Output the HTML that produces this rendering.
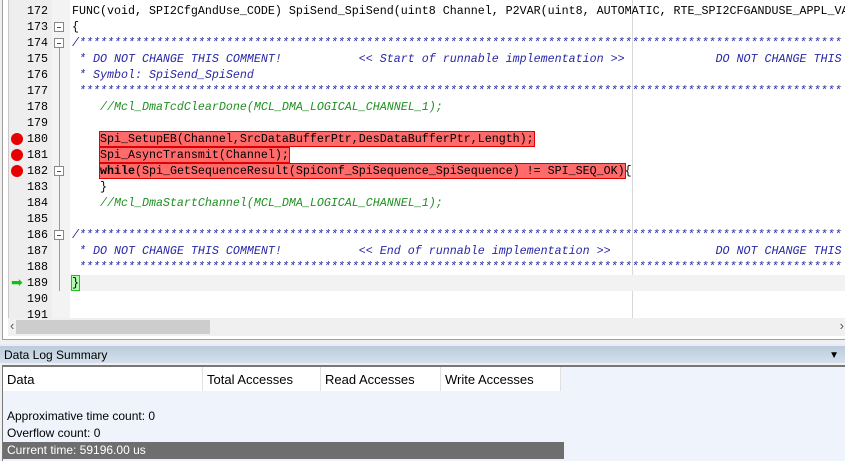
<!DOCTYPE html>
<html><head><style>
*{margin:0;padding:0;box-sizing:border-box}
body{width:845px;height:461px;overflow:hidden;background:#f0f0f0;position:relative;font-family:"Liberation Sans",sans-serif}
#ed{position:absolute;left:2px;top:0;width:843px;height:340px;border-left:1px solid #a0a0a0;border-bottom:1px solid #a0a0a0;background:#fff}
#inner{position:absolute;left:5px;top:0;width:838px;height:318px;background:#fff;overflow:hidden;border-left:1px solid #c8c8c8}
#gut{position:absolute;left:0;top:0;width:43px;height:318px;background:#eeeeee}
#fold{position:absolute;left:43px;top:0;width:18px;height:318px;background:#f3f3f3}
.row{position:absolute;left:0;height:16px;width:838px;font-family:"Liberation Mono",monospace;font-size:11.67px;line-height:16px;white-space:pre}
.num{position:absolute;left:0;width:39px;text-align:right;color:#000}
.code{position:absolute;left:63px}
.cm{color:#2828a8;font-style:italic}
.gr{color:#209020;font-style:italic}
.hl{background:#ff6a6a;outline:1px solid #e00000}
.bp{position:absolute;left:2px;top:2px;width:12px;height:12px;border-radius:50%;background:#e80000}
.box{position:absolute;left:45px;top:3px;width:10px;height:10px;border:1px solid #888;background:#fff}
.box:after{content:"";position:absolute;left:2px;top:4px;width:4px;height:1px;background:#555}
#vl{position:absolute;left:623px;top:0;width:1px;height:318px;background:#d8d8d8}
#sb{position:absolute;left:5px;top:318px;width:838px;height:18px;background:#f0f0f0}
#thumb{position:absolute;left:8px;top:2px;width:194px;height:14px;background:#cdcdcd}
#hdr{position:absolute;left:0;top:344px;width:845px;height:19px;background:linear-gradient(#bccbdb,#d4e0ec);font-size:12px;line-height:19px;padding-left:4px;color:#000;border-top:2px solid #e8ecf6}
#tbl{position:absolute;left:2px;top:365px;width:843px;height:96px;background:#eef3fc;border-left:1px solid #777;border-top:2px solid #777}
.th{position:absolute;top:0;height:24px;background:#fff;border-right:1px solid #e0e0e0;font-size:13px;line-height:26px;padding-left:4px}
.t{position:absolute;left:4px;font-size:12px;line-height:16px}
</style></head><body>
<div id="ed">
<div id="inner">
<div id="gut"></div><div id="fold"></div>
<div style="position:absolute;left:50px;top:43px;width:1px;height:248px;background:#999"></div>
<div id="vl"></div>
<div style="position:absolute;top:275px;width:838px;height:16px;background:#f2f2f2;left:61px"></div>

<div class="row" style="top:3px"><span class="num">172</span><span class="code">FUNC(void, SPI2CfgAndUse_CODE) SpiSend_SpiSend(uint8 Channel, P2VAR(uint8, AUTOMATIC, RTE_SPI2CFGANDUSE_APPL_VA</span></div>
<div class="row" style="top:19px"><span class="num">173</span><span class="box"></span><span class="code">{</span></div>
<div class="row" style="top:35px"><span class="num">174</span><span class="box"></span><span class="code cm">/*************************************************************************************************************</span></div>
<div class="row" style="top:51px"><span class="num">175</span><span class="code cm"> * DO NOT CHANGE THIS COMMENT!           &lt;&lt; Start of runnable implementation &gt;&gt;             DO NOT CHANGE THIS</span></div>
<div class="row" style="top:67px"><span class="num">176</span><span class="code cm"> * Symbol: SpiSend_SpiSend</span></div>
<div class="row" style="top:83px"><span class="num">177</span><span class="code cm"> *************************************************************************************************************</span></div>
<div class="row" style="top:99px"><span class="num">178</span><span class="code gr">    //Mcl_DmaTcdClearDone(MCL_DMA_LOGICAL_CHANNEL_1);</span></div>
<div class="row" style="top:115px"><span class="num">179</span></div>
<div class="row" style="top:131px"><span class="bp"></span><span class="num">180</span><span class="code">    <span class="hl">Spi_SetupEB(Channel,SrcDataBufferPtr,DesDataBufferPtr,Length);</span></span></div>
<div class="row" style="top:147px"><span class="bp"></span><span class="num">181</span><span class="code">    <span class="hl">Spi_AsyncTransmit(Channel);</span></span></div>
<div class="row" style="top:163px"><span class="bp"></span><span class="num">182</span><span class="box"></span><span class="code">    <span class="hl"><b>while</b>(Spi_GetSequenceResult(SpiConf_SpiSequence_SpiSequence) != SPI_SEQ_OK)</span>{</span></div>
<div class="row" style="top:179px"><span class="num">183</span><span class="code">    }</span></div>
<div class="row" style="top:195px"><span class="num">184</span><span class="code gr">    //Mcl_DmaStartChannel(MCL_DMA_LOGICAL_CHANNEL_1);</span></div>
<div class="row" style="top:211px"><span class="num">185</span></div>
<div class="row" style="top:227px"><span class="num">186</span><span class="box"></span><span class="code cm">/*************************************************************************************************************</span></div>
<div class="row" style="top:243px"><span class="num">187</span><span class="code cm"> * DO NOT CHANGE THIS COMMENT!           &lt;&lt; End of runnable implementation &gt;&gt;               DO NOT CHANGE THIS</span></div>
<div class="row" style="top:259px"><span class="num">188</span><span class="code cm"> *************************************************************************************************************</span></div>
<div class="row" style="top:275px"><span style="position:absolute;left:2px;top:0;color:#10c010;font-size:14px;font-family:'DejaVu Sans'">➡</span><span class="num">189</span><span class="code"><span style="background:#b0ffb0;outline:1px solid #20c020">}</span></span></div>
<div class="row" style="top:291px"><span class="num">190</span></div>
<div class="row" style="top:307px"><span class="num">191</span></div>
</div>
<div id="sb"><span style="position:absolute;left:2px;top:0;font-size:13px;color:#555">‹</span><div id="thumb"></div><span style="position:absolute;right:2px;top:0;font-size:13px;color:#555">›</span></div>
</div>
<div id="hdr">Data Log Summary<span style="position:absolute;right:6px;top:0;font-size:10px">▼</span></div>
<div id="tbl">
<div class="th" style="left:0;width:200px">Data</div>
<div class="th" style="left:200px;width:118px">Total Accesses</div>
<div class="th" style="left:318px;width:120px">Read Accesses</div>
<div class="th" style="left:438px;width:120px">Write Accesses</div>
<div class="t" style="top:41px">Approximative time count: 0</div>
<div class="t" style="top:58px">Overflow count: 0</div>
<div style="position:absolute;left:0;top:75px;width:561px;height:17px;background:#6e6e6e;color:#fff;font-size:12px;line-height:17px;padding-left:4px">Current time: 59196.00 us</div>
</div>
</body></html>
